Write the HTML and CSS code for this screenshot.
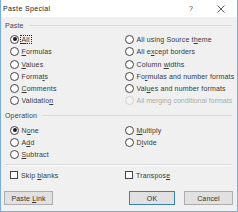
FILE: index.html
```html
<!DOCTYPE html>
<html lang="en">
<head>
	<meta charset="UTF-8">
	<title>Paste Special</title>
	<link rel="stylesheet" href="styles.css">
</head>
<body>
	<div class="dialog">
		<div class="titlebar">
			<span class="title">Paste Special</span>
			<span class="help">?</span>
			<span class="close">
				<svg width="8" height="8" viewBox="0 0 8 8"><path d="M0.5 0.5L7.5 7.5M7.5 0.5L0.5 7.5" stroke="#333" stroke-width="0.8" fill="none"/></svg>
			</span>
		</div>
		<div class="content">
			<div class="group-head first">Paste</div>
			<div class="grid paste">
				<label class="opt"><i class="radio on"></i><span class="focus"><u>A</u>ll</span></label>
				<label class="opt"><i class="radio"></i><span>All using Source t<u>h</u>eme</span></label>
				<label class="opt"><i class="radio"></i><span><u>F</u>ormulas</span></label>
				<label class="opt"><i class="radio"></i><span>All e<u>x</u>cept borders</span></label>
				<label class="opt"><i class="radio"></i><span><u>V</u>alues</span></label>
				<label class="opt"><i class="radio"></i><span>Column <u>w</u>idths</span></label>
				<label class="opt"><i class="radio"></i><span>Forma<u>t</u>s</span></label>
				<label class="opt"><i class="radio"></i><span>Fo<u>r</u>mulas and number formats</span></label>
				<label class="opt"><i class="radio"></i><span><u>C</u>omments</span></label>
				<label class="opt"><i class="radio"></i><span>Val<u>u</u>es and number formats</span></label>
				<label class="opt"><i class="radio"></i><span>Validatio<u>n</u></span></label>
				<label class="opt disabled"><i class="radio"></i><span>All merging conditional formats</span></label>
			</div>

			<div class="group-head">Operation</div>
			<div class="grid op">
				<label class="opt"><i class="radio on"></i><span>N<u>o</u>ne</span></label>
				<label class="opt"><i class="radio"></i><span><u>M</u>ultiply</span></label>
				<label class="opt"><i class="radio"></i><span>A<u>d</u>d</span></label>
				<label class="opt"><i class="radio"></i><span>D<u>i</u>vide</span></label>
				<label class="opt"><i class="radio"></i><span><u>S</u>ubtract</span></label>
			</div>

			<div class="sep"></div>

			<div class="grid checks">
				<label class="opt"><i class="check"></i><span>Skip <u>b</u>lanks</span></label>
				<label class="opt"><i class="check"></i><span>Transpos<u>e</u></span></label>
			</div>

			<div class="buttons">
				<div class="btn"><span>Paste <u>L</u>ink</span></div>
				<div class="btn default"><span>OK</span></div>
				<div class="btn"><span>Cancel</span></div>
			</div>
		</div>
	</div>
</body>
</html>
```

FILE: styles.css
```css
*{
	margin: 0;
	padding: 0;
}
body{
	font-family: "Liberation Sans", Arial, sans-serif;
	font-size: 7px;
	letter-spacing: 0.15px;
	color: #383838;
	background: #fff;
}
u{
	text-decoration: underline;
	text-underline-offset: 1px;
}
.dialog{
	width: 238px;
	height: 212px;
	box-sizing: border-box;
	border: 1px solid #7aaee0;
	border-top: none;
	background: #f0f0f0;
	display: flex;
	flex-direction: column;
}
.titlebar{
	height: 17px;
	background: #fff;
	display: flex;
	align-items: center;
	padding-left: 2px;
	letter-spacing: 0.35px;
	color: #222;
}
.title{
	flex: 1;
}
.help{
	width: 6px;
	margin-right: 22px;
	color: #444;
}
.close{
	width: 8px;
	height: 8px;
	margin-right: 12px;
	display: flex;
}

.content{
	flex: 1;
	padding: 3px 4px 0 4px;
}
.group-head{
	display: flex;
	align-items: center;
	height: 10px;
	margin-top: 3.6px;
	color: #444;
}
.group-head.first{
	margin-top: 0;
}
.group-head::after{
	content: "";
	flex: 1;
	height: 1px;
	background: #dadada;
	margin-left: 5px;
	margin-right: 1px;
}

.grid{
	display: grid;
	grid-template-columns: 115px 1fr;
	grid-auto-rows: 12.3px;
	padding-left: 5px;
	margin-top: 3.3px;
}
.opt{
	display: flex;
	align-items: center;
	white-space: nowrap;
}
.radio{
	width: 9px;
	height: 9px;
	box-sizing: border-box;
	border: 1px solid #444;
	border-radius: 50%;
	background: #fff;
	margin-right: 2.5px;
	display: flex;
	align-items: center;
	justify-content: center;
}
.radio.on::after{
	content: "";
	width: 4px;
	height: 4px;
	border-radius: 50%;
	background: #1a1a1a;
}
.check{
	width: 8px;
	height: 8px;
	box-sizing: border-box;
	border: 1px solid #444;
	background: #fff;
	margin-right: 3px;
}
.focus{
	outline: 1px dotted #222;
	outline-offset: 0;
	padding: 0 1px;
	margin-left: -1px;
}
.disabled{
	color: #ababab;
	letter-spacing: 0;
}
.disabled .radio{
	border-color: #d0d0d0;
	background: #f4f4f4;
}

.sep{
	height: 1px;
	background: #dadada;
	border-bottom: 1px solid #fff;
	margin: 3px 1px 0 0;
}
.checks{
	margin-top: 3px;
}

.buttons{
	display: flex;
	margin-top: 10px;
	margin-left: -1px;
	gap: 9px;
}
.btn{
	width: 49px;
	height: 14px;
	box-sizing: border-box;
	border: 1px solid #adadad;
	background: #e1e1e1;
	display: flex;
	align-items: center;
	justify-content: center;
	color: #333;
}
.btn.default{
	margin-left: auto;
	width: 46px;
	border-color: #3c7fb1;
}
```
